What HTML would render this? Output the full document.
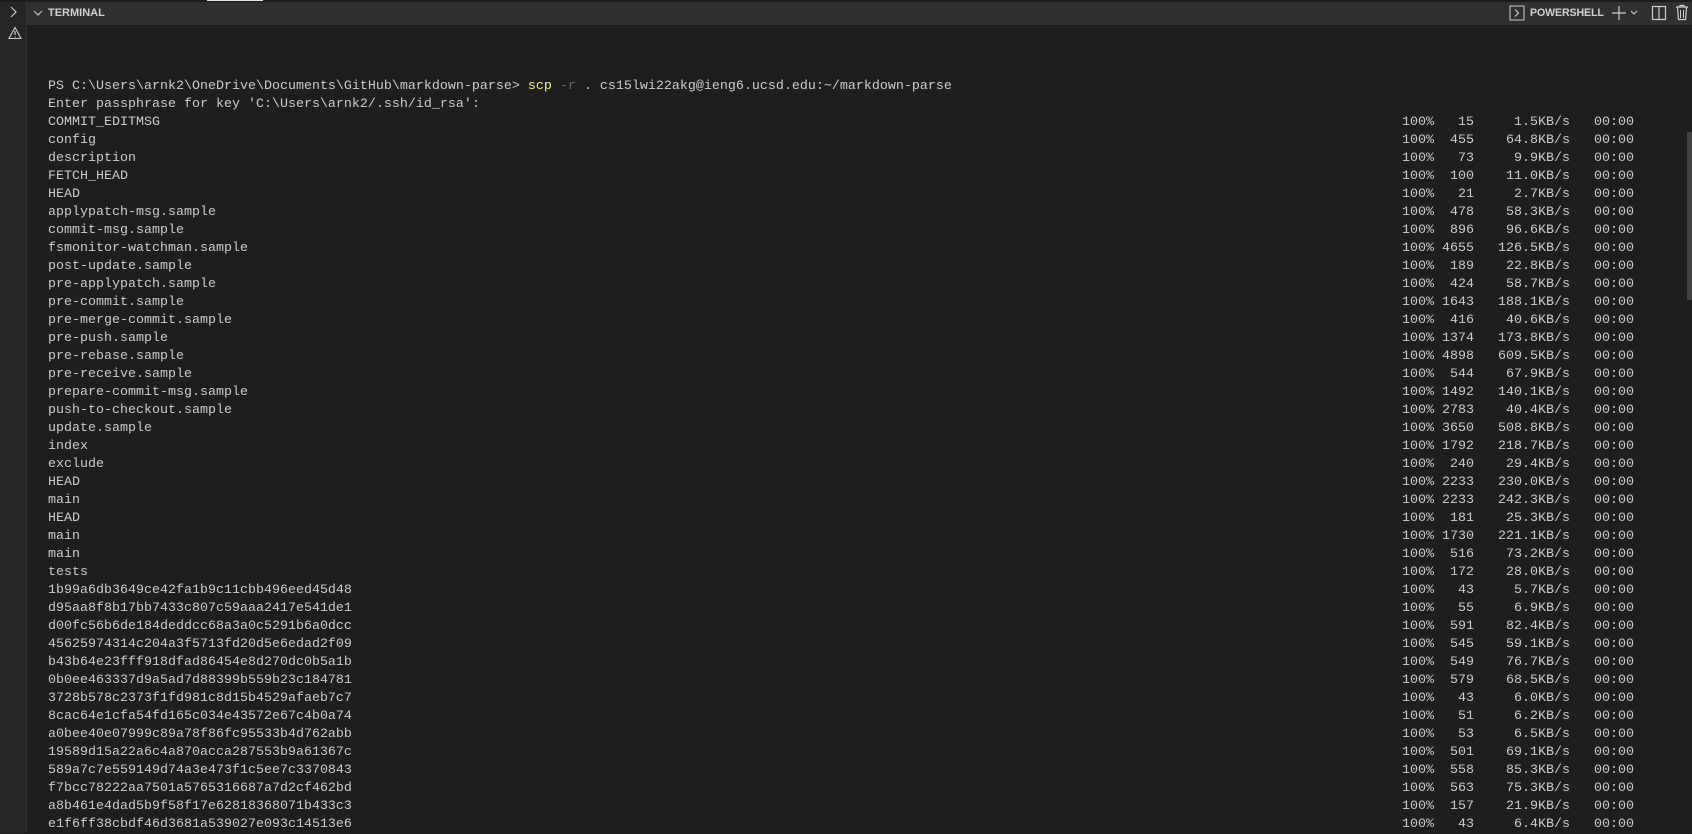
<!DOCTYPE html>
<html><head><meta charset="utf-8"><style>
html,body{margin:0;padding:0;width:1692px;height:833px;overflow:hidden;background:#1e1e1e;}
.side{position:absolute;left:0;top:0;width:26px;height:833px;background:#252526;border-right:1px solid #333;}
.hdr{position:absolute;left:27px;top:2px;right:0;height:23px;background:#303030;}
.top{position:absolute;left:0;top:0;width:1692px;height:2px;background:#1b1b1b;}
.tab{position:absolute;left:207px;top:0;width:56px;height:1px;background:#e8e8e8;}
.t{font-family:"Liberation Sans",sans-serif;font-weight:bold;font-size:11px;color:#d0d0d0;position:absolute;}
pre{margin:0;position:absolute;font-family:"Liberation Mono",monospace;font-size:13.33px;line-height:18px;color:#cccccc;}
.y{color:#f1f187}.g{color:#666}
.sb{position:absolute;left:1687px;top:132px;width:5px;height:168px;background:#424242;}
</style></head><body>
<div class="side"></div>
<div class="top"></div><div class="tab"></div>
<div class="hdr"></div>
<svg style="position:absolute;left:9px;top:6px" width="10" height="12"><path d="M2 1l5 5-5 5" stroke="#ccc" fill="none" stroke-width="1.2"/></svg>
<svg style="position:absolute;left:8px;top:26px" width="14" height="14"><path d="M7 1.5L13 12.5H1Z" stroke="#ccc" fill="none" stroke-width="1.1"/><path d="M7 5v4M7 10.5v1" stroke="#ccc" stroke-width="1.2"/></svg>
<svg style="position:absolute;left:33px;top:9px" width="10" height="8"><path d="M1 2l4 4 4-4" stroke="#ccc" fill="none" stroke-width="1.1"/></svg>
<div class="t" style="left:48px;top:7px">TERMINAL</div>
<svg style="position:absolute;left:1509px;top:5px" width="16" height="16"><rect x="1" y="1" width="14" height="14" fill="none" stroke="#ccc"/><path d="M6 4.5l3.5 3.5-3.5 3.5" stroke="#ccc" fill="none" stroke-width="1.2"/></svg>
<div class="t" style="left:1530px;top:7px;font-size:10.6px;letter-spacing:-0.1px">POWERSHELL</div>
<svg style="position:absolute;left:1612px;top:5px" width="30" height="16"><path d="M7 1v14M0 8h14" stroke="#ccc" stroke-width="1.2"/><path d="M19 6l3 3 3-3" stroke="#ccc" fill="none"/></svg>
<svg style="position:absolute;left:1651px;top:5px" width="16" height="16"><rect x="1.5" y="1.5" width="13" height="13" fill="none" stroke="#ccc" stroke-width="1.2"/><path d="M8 1.5v13" stroke="#ccc" stroke-width="1.2"/></svg>
<svg style="position:absolute;left:1675px;top:4px" width="14" height="17"><path d="M1 3h12M5 3V1.5h4V3M2.5 3.5l1 12h7l1-12" stroke="#ccc" fill="none" stroke-width="1.2"/><path d="M5.5 6v8M8.5 6v8" stroke="#ccc"/></svg>
<div class="sb"></div>
<pre style="left:48px;top:78px">PS C:\Users\arnk2\OneDrive\Documents\GitHub\markdown-parse&gt; <span class="y">scp</span> <span class="g">-r</span> . cs15lwi22akg@ieng6.ucsd.edu:~/markdown-parse
Enter passphrase for key 'C:\Users\arnk2/.ssh/id_rsa':
COMMIT_EDITMSG
config
description
FETCH_HEAD
HEAD
applypatch-msg.sample
commit-msg.sample
fsmonitor-watchman.sample
post-update.sample
pre-applypatch.sample
pre-commit.sample
pre-merge-commit.sample
pre-push.sample
pre-rebase.sample
pre-receive.sample
prepare-commit-msg.sample
push-to-checkout.sample
update.sample
index
exclude
HEAD
main
HEAD
main
main
tests
1b99a6db3649ce42fa1b9c11cbb496eed45d48
d95aa8f8b17bb7433c807c59aaa2417e541de1
d00fc56b6de184deddcc68a3a0c5291b6a0dcc
45625974314c204a3f5713fd20d5e6edad2f09
b43b64e23fff918dfad86454e8d270dc0b5a1b
0b0ee463337d9a5ad7d88399b559b23c184781
3728b578c2373f1fd981c8d15b4529afaeb7c7
8cac64e1cfa54fd165c034e43572e67c4b0a74
a0bee40e07999c89a78f86fc95533b4d762abb
19589d15a22a6c4a870acca287553b9a61367c
589a7c7e559149d74a3e473f1c5ee7c3370843
f7bcc78222aa7501a5765316687a7d2cf462bd
a8b461e4dad5b9f58f17e62818368071b433c3
e1f6ff38cbdf46d3681a539027e093c14513e6</pre>
<pre style="left:1402px;top:114px">100%   15     1.5KB/s   00:00
100%  455    64.8KB/s   00:00
100%   73     9.9KB/s   00:00
100%  100    11.0KB/s   00:00
100%   21     2.7KB/s   00:00
100%  478    58.3KB/s   00:00
100%  896    96.6KB/s   00:00
100% 4655   126.5KB/s   00:00
100%  189    22.8KB/s   00:00
100%  424    58.7KB/s   00:00
100% 1643   188.1KB/s   00:00
100%  416    40.6KB/s   00:00
100% 1374   173.8KB/s   00:00
100% 4898   609.5KB/s   00:00
100%  544    67.9KB/s   00:00
100% 1492   140.1KB/s   00:00
100% 2783    40.4KB/s   00:00
100% 3650   508.8KB/s   00:00
100% 1792   218.7KB/s   00:00
100%  240    29.4KB/s   00:00
100% 2233   230.0KB/s   00:00
100% 2233   242.3KB/s   00:00
100%  181    25.3KB/s   00:00
100% 1730   221.1KB/s   00:00
100%  516    73.2KB/s   00:00
100%  172    28.0KB/s   00:00
100%   43     5.7KB/s   00:00
100%   55     6.9KB/s   00:00
100%  591    82.4KB/s   00:00
100%  545    59.1KB/s   00:00
100%  549    76.7KB/s   00:00
100%  579    68.5KB/s   00:00
100%   43     6.0KB/s   00:00
100%   51     6.2KB/s   00:00
100%   53     6.5KB/s   00:00
100%  501    69.1KB/s   00:00
100%  558    85.3KB/s   00:00
100%  563    75.3KB/s   00:00
100%  157    21.9KB/s   00:00
100%   43     6.4KB/s   00:00</pre>
</body></html>
